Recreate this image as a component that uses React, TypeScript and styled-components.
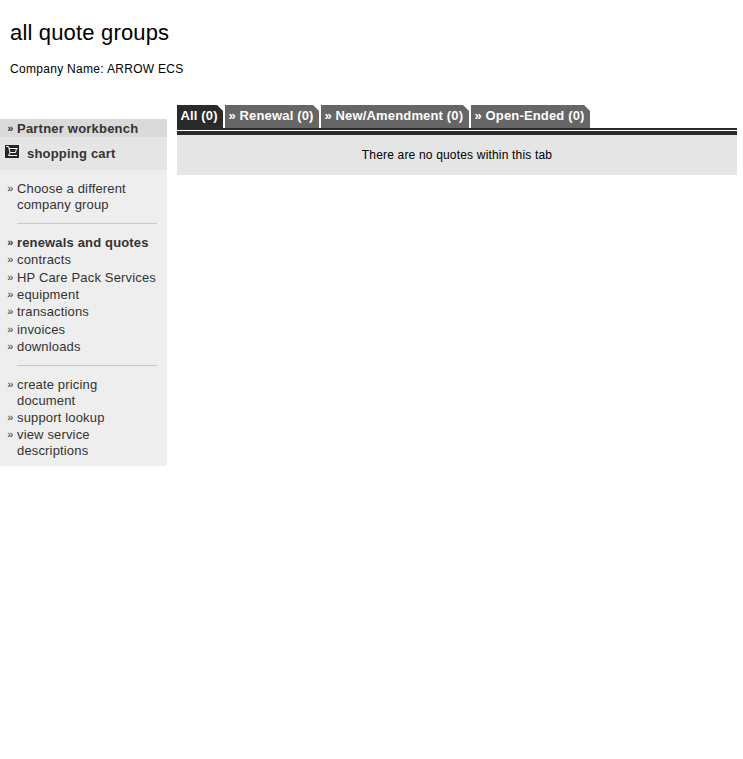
import React from "react";
import styled, { createGlobalStyle } from "styled-components";

const GlobalStyle = createGlobalStyle`
  * { box-sizing: border-box; }
  body {
    margin: 0;
    background: #fff;
    color: #000;
    font-family: Arial, "Liberation Sans", sans-serif;
  }
`;

const Page = styled.div`
  width: 743px;
  height: 759px;
  overflow: hidden;
`;

const Header = styled.header`
  height: 105px;
  padding: 20px 10px 0;
`;

const Title = styled.h1`
  margin: 0;
  font-size: 22px;
  font-weight: 400;
  line-height: 26px;
  letter-spacing: 0.17px;
`;

const Company = styled.p`
  margin: 15px 0 0;
  font-size: 12px;
  line-height: 16px;
  letter-spacing: 0.3px;
`;

const Body = styled.div`
  display: flex;
  align-items: flex-start;
  gap: 10px;
`;

const Sidebar = styled.nav`
  width: 167px;
  height: 347px;
  margin-top: 14px;
  background: #eee;
  color: #333;
  font-size: 13px;
  line-height: 16px;
`;

const Workbench = styled.div`
  display: flex;
  height: 18px;
  padding: 2px 0 0 7px;
  background: #dadada;
  font-weight: 700;
`;

const Cart = styled.div`
  display: flex;
  height: 33px;
  padding: 9px 0 0 5px;
  background: #e5e5e5;
  font-weight: 700;
  svg { margin: -1px 8px 0 0; flex: none; }
`;

const List = styled.ul<{ $gap: number }>`
  display: flex;
  flex-direction: column;
  gap: ${(p) => p.$gap}px;
  margin: 0;
  padding: 11px 0 0 7px;
  list-style: none;
`;

const Item = styled.li<{ $bold?: boolean }>`
  display: flex;
  font-weight: ${(p) => (p.$bold ? 700 : 400)};
`;

const Arrow = styled.span`
  flex: none;
  width: 10px;
  padding-left: 0.3px;
  font-size: 11px;
  line-height: 15px;
`;

const Label = styled.span<{ $spacing?: number }>`
  white-space: pre-line;
  letter-spacing: ${(p) => p.$spacing ?? 0.16}px;
`;

const Divider = styled.hr<{ $top: number }>`
  width: 140px;
  height: 1px;
  margin: ${(p) => p.$top}px 0 0 17px;
  border: 0;
  background: #c8c8c8;
`;

const Main = styled.main`
  width: 560px;
`;

const Tabs = styled.div`
  display: flex;
  gap: 2px;
  height: 23px;
`;

const Tab = styled.div<{ $active?: boolean; $width: number }>`
  width: ${(p) => p.$width}px;
  padding-left: 3.4px;
  background: ${(p) => (p.$active ? "#2a2a2a" : "#666")};
  clip-path: polygon(0 0, calc(100% - 6px) 0, 100% 6px, 100% 100%, 0 100%);
  color: #fff;
  font-size: 13px;
  font-weight: 700;
  line-height: 21px;
  letter-spacing: 0.16px;
  white-space: nowrap;
`;

const Rules = styled.div`
  height: 7px;
  border-top: 2px solid #2a2a2a;
  border-bottom: 4px solid #2a2a2a;
`;

const Panel = styled.div`
  height: 40px;
  background: #e5e5e5;
  font-size: 12px;
  line-height: 40px;
  letter-spacing: 0.18px;
  text-align: center;
`;

const CartIcon = () => (
  <svg width="14" height="13" viewBox="0 0 14 13">
    <path fill="#262626" d="M0 0h14v13H0z" />
    <path
      fill="none"
      stroke="#fff"
      d="M1 1.5H3.5L5 7.5M4 3.5H12.5M11.5 3.5L10.5 7.5H5L3.5 10.5H12"
    />
  </svg>
);

type Entry = { text: string; bold?: boolean };

const groups: { dividerTop?: number; gap: number; items: Entry[] }[] = [
  { gap: 0, items: [{ text: "Choose a different\ncompany group" }] },
  {
    dividerTop: 10,
    gap: 1.36,
    items: [
      { text: "renewals and quotes", bold: true },
      { text: "contracts" },
      { text: "HP Care Pack Services" },
      { text: "equipment" },
      { text: "transactions" },
      { text: "invoices" },
      { text: "downloads" },
    ],
  },
  {
    dividerTop: 9.84,
    gap: 1,
    items: [
      { text: "create pricing\ndocument" },
      { text: "support lookup" },
      { text: "view service\ndescriptions" },
    ],
  },
];

const tabs = [
  { text: "All (0)", width: 46, active: true },
  { text: "» Renewal (0)", width: 94 },
  { text: "» New/Amendment (0)", width: 148 },
  { text: "» Open-Ended (0)", width: 119 },
];

export default function App() {
  return (
    <Page>
      <GlobalStyle />
      <Header>
        <Title>all quote groups</Title>
        <Company>Company Name: ARROW ECS</Company>
      </Header>
      <Body>
        <Sidebar>
          <Workbench>
            <Arrow>»</Arrow>
            <Label $spacing={0.21}>Partner workbench</Label>
          </Workbench>
          <Cart>
            <CartIcon />
            <Label $spacing={0.2}>shopping cart</Label>
          </Cart>
          {groups.map((group, i) => (
            <React.Fragment key={i}>
              {group.dividerTop && <Divider $top={group.dividerTop} />}
              <List $gap={group.gap}>
                {group.items.map((item) => (
                  <Item key={item.text} $bold={item.bold}>
                    <Arrow>»</Arrow>
                    <Label>{item.text}</Label>
                  </Item>
                ))}
              </List>
            </React.Fragment>
          ))}
        </Sidebar>
        <Main>
          <Tabs>
            {tabs.map((tab) => (
              <Tab key={tab.text} $width={tab.width} $active={tab.active}>
                {tab.text}
              </Tab>
            ))}
          </Tabs>
          <Rules />
          <Panel>There are no quotes within this tab</Panel>
        </Main>
      </Body>
    </Page>
  );
}
